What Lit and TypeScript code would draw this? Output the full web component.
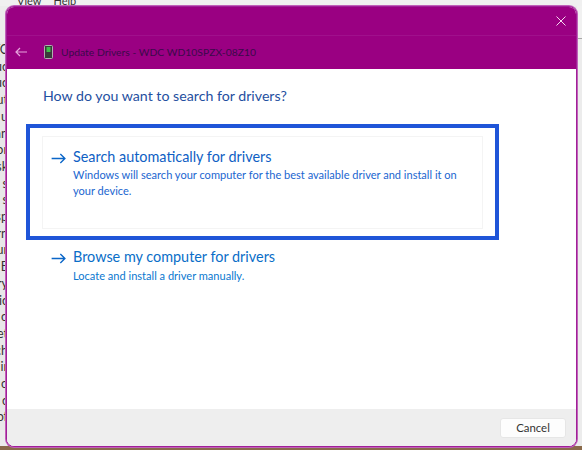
import { LitElement, html, css } from "lit";
import { customElement } from "lit/decorators.js";

const Arrow = (cls: string) => html`<svg class=${cls} viewBox="0 0 16 12" fill="none" stroke="currentColor" stroke-width="1.5"><path d="M0.5 6H15M10 1l5 5-5 5"/></svg>`;

@customElement("app-root")
export class AppRoot extends LitElement {
  static styles = css`
    :host { display: block; width: 582px; height: 450px; position: relative; overflow: hidden; background: #ececec; font-family: "Lato", "Open Sans", sans-serif; }
    .menu { height: 6px; background: #f0f0f0; display: flex; gap: 12px; padding-left: 17px; overflow: hidden; font-size: 11px; line-height: 1; color: #333; }
    .menu span { display: block; margin-top: -5px; }
    .rbar { position: absolute; right: 0; top: 6px; width: 5px; height: 33px; box-sizing: border-box; background: #f1f1f1; border-bottom: 1px solid #a8a8a8; }
    .side { position: absolute; left: 0; top: 42px; width: 7px; height: 388px; overflow: hidden; background: #e8e8e8; font-size: 12.5px; color: #333; line-height: 16.7px; white-space: nowrap; display: flex; flex-direction: column; align-items: flex-end; }
    .side div { margin-right: -1px; }
    .strip { position: absolute; left: 0; right: 0; bottom: 0; height: 4px; background: #8a6a4a; }
    .dialog { position: absolute; left: 6px; top: 6px; width: 571px; height: 441px; box-sizing: border-box; border: 1px solid #a01f98; border-radius: 8px; background: #fff; overflow: hidden; display: flex; flex-direction: column; box-shadow: 0 0 0 1px #c060b8; }
    .head { background: #9a0082; height: 62px; flex: none; display: flex; flex-direction: column; }
    .top { height: 29px; display: flex; justify-content: flex-end; align-items: center; padding-right: 10px; border-bottom: 1px solid #a0108c; box-sizing: border-box; flex: none; }
    .close { width: 10px; height: 10px; color: #f5d8f0; }
    .nav { flex: 1; display: flex; align-items: center; padding: 0 0 2px 8px; }
    .back { width: 12px; height: 10px; color: #e6a4dc; }
    .dev { margin-left: 17px; width: 9px; height: 14px; }
    .title { margin-left: 8px; font-size: 10.35px; color: #3a0a4a; }
    .body { flex: 1; padding: 16px 20px 0 19px; position: relative; }
    h1 { margin: 0; font-weight: 400; font-size: 14.2px; color: #1f4fa0; line-height: 22px; padding-left: 17px; }
    .hl { margin-top: 17px; width: 473px; height: 116px; box-sizing: border-box; border: 4px solid #1f55d8; padding: 8px 12px; }
    .card { box-sizing: border-box; height: 93px; border: 1px solid #f4f4f4; padding: 10px 8px; display: flex; }
    .opt { display: flex; gap: 7px; }
    .arrow { width: 15px; height: 11px; color: #0a66c8; margin-top: 6px; flex: none; }
    .t { font-size: 14.4px; line-height: 20px; color: #0f5fc4; }
    .s { font-size: 11.05px; line-height: 15.5px; color: #1a66d0; }
    .opt.second { padding: 7px 0 0 25px; }
    .second .t { color: #0a6ec8; }
    .second .s { margin-top: 1px; color: #0a78d0; }
    .foot { height: 37px; flex: none; background: #eeeeee; display: flex; align-items: center; justify-content: flex-end; padding-right: 10px; }
    button { width: 66px; height: 20px; background: #fdfdfd; border: 1px solid #e6e6e6; border-radius: 3px; font: inherit; font-size: 11.4px; color: #333; padding: 0; }
  `;
  render() {
    const lines = ["TC","uc","uc","ut","u","an","or","sk","s","s","sp","rn","ur","E","ry","ic","o","et","ch","ir","o","c","of"];
    return html`
      <div class="menu"><span>View</span><span>Help</span></div>
      <div class="rbar"></div>
      <div class="side">${lines.map((l) => html`<div>${l}</div>`)}</div>
      <div class="strip"></div>
      <div class="dialog">
        <div class="head">
          <div class="top"><svg class="close" viewBox="0 0 10 10" stroke="currentColor" stroke-width="1"><path d="M0.5 0.5l9 9M9.5 0.5l-9 9"/></svg></div>
          <div class="nav">
            <svg class="back" viewBox="0 0 12 10" fill="none" stroke="currentColor" stroke-width="1.2"><path d="M0.8 5H12M5 1L1 5l4 4"/></svg>
            <svg class="dev" viewBox="0 0 9 14"><rect x="0.5" y="0.5" width="8" height="13" rx="1" fill="#3a3a3a" stroke="#b0b0b0"/><rect x="2.5" y="2" width="4" height="5" fill="#3fbf4a"/></svg>
            <span class="title">Update Drivers - WDC WD10SPZX-08Z10</span>
          </div>
        </div>
        <div class="body">
          <h1>How do you want to search for drivers?</h1>
          <div class="hl"><div class="card"><div class="opt">${Arrow("arrow")}<div><div class="t">Search automatically for drivers</div><div class="s">Windows will search your computer for the best available driver and install it on<br>your device.</div></div></div></div></div>
          <div class="opt second">${Arrow("arrow")}<div><div class="t">Browse my computer for drivers</div><div class="s">Locate and install a driver manually.</div></div></div>
        </div>
        <div class="foot"><button>Cancel</button></div>
      </div>`;
  }
}
